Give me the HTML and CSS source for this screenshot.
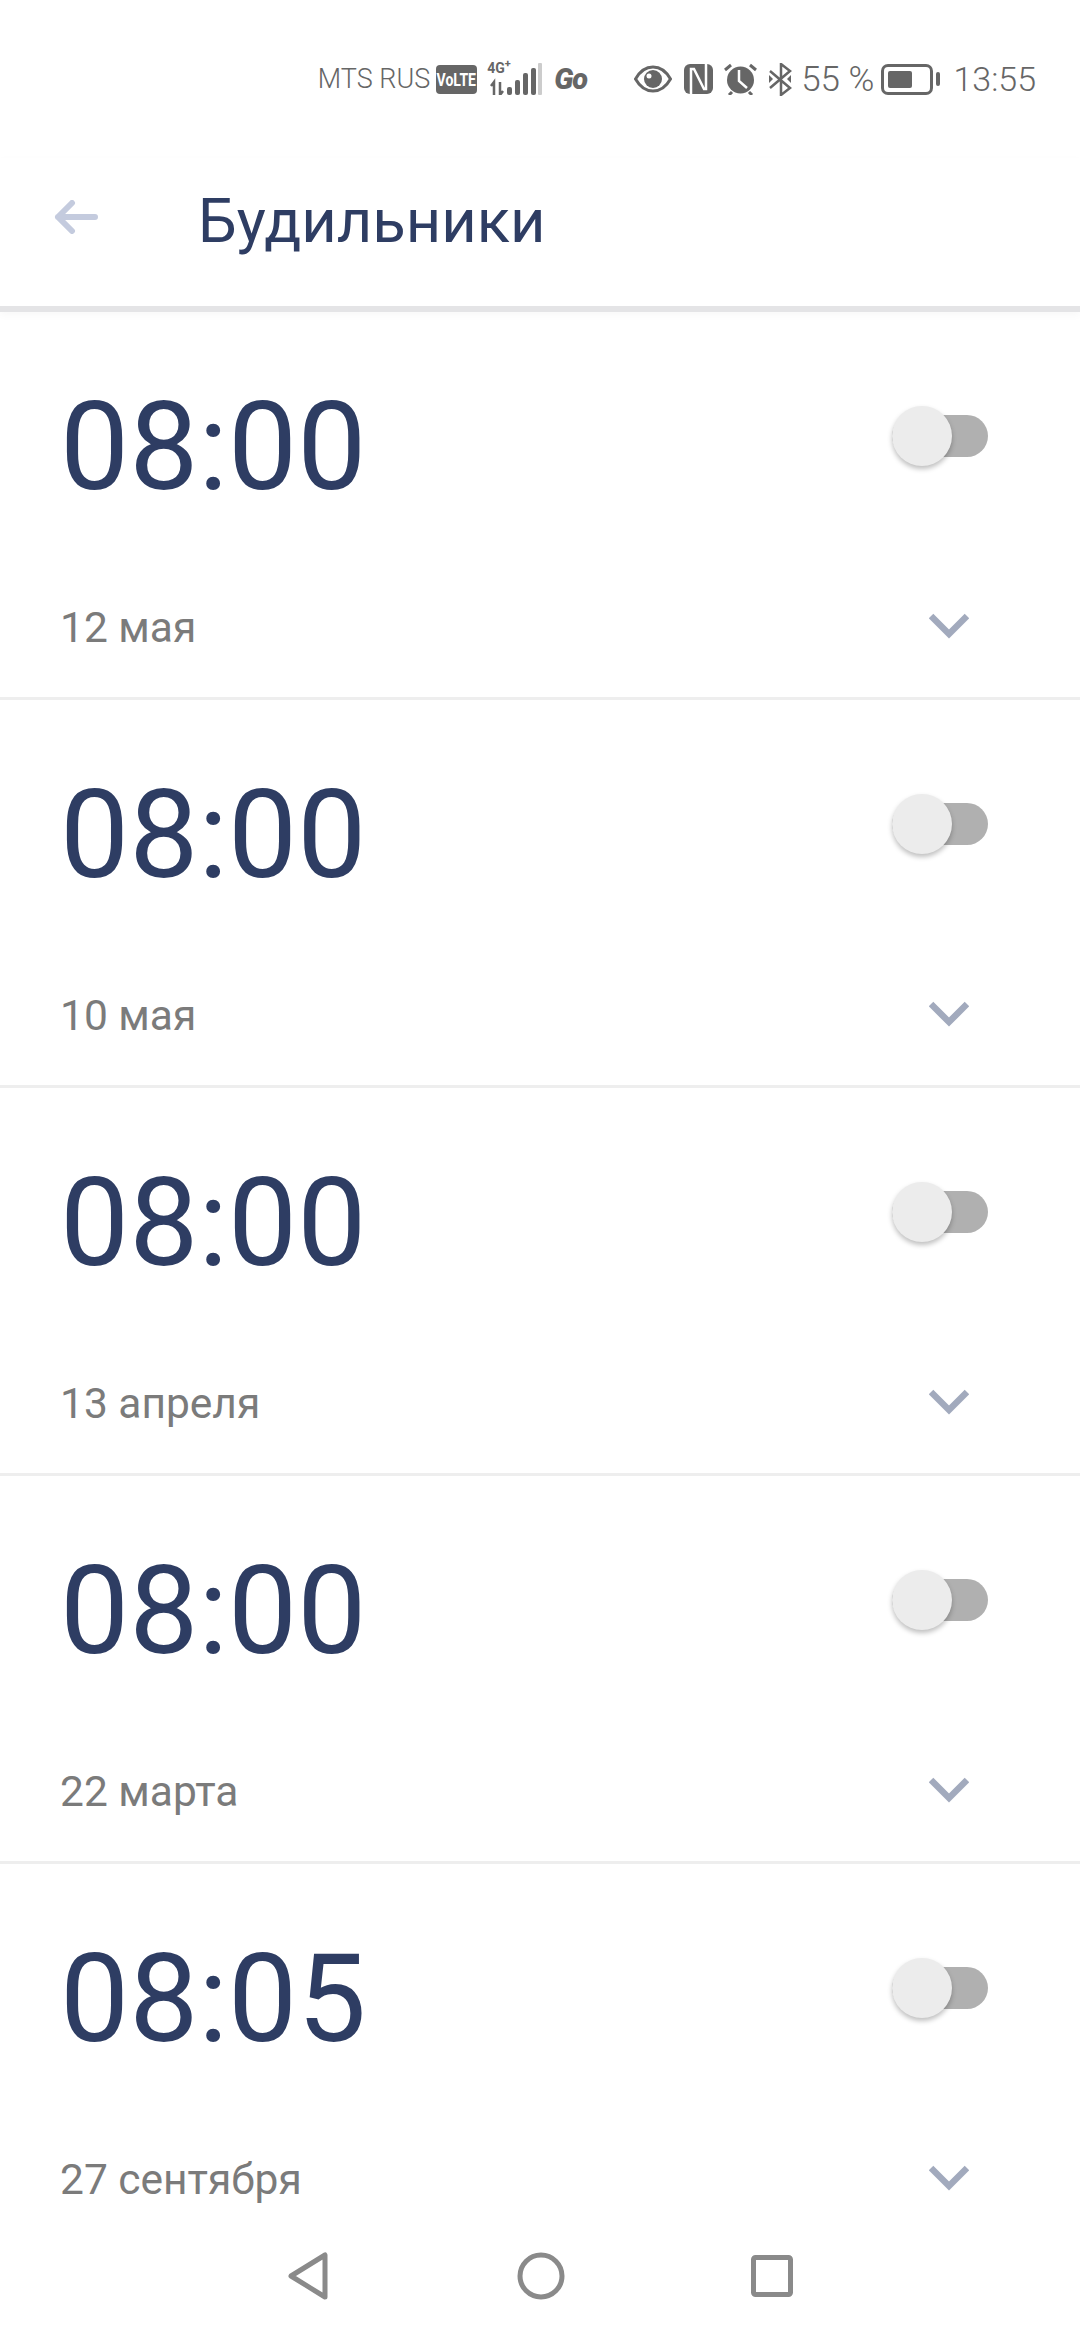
FILE: index.html
```html
<!DOCTYPE html>
<html lang="ru">
<head>
<meta charset="UTF-8">
<title>Будильники</title>
<link rel="stylesheet" href="styles.css">
</head>
<body>

<div class="screen">
  <div class="status">
    <span class="carrier">MTS RUS</span>
    <span class="volte"><span class="volte-text">VoLTE</span></span>
    <!-- 4G+ и сигнал -->
    <span class="signal">
      <span class="net">4G<sup>+</sup></span>
      <svg class="bars" width="55" height="32" viewBox="0 0 55 32">
        <path d="M7 32V19l-3 4M13 19v13l3-4" fill="none" stroke="#666" stroke-width="2.5"/>
        <rect x="20" y="24" width="5" height="8" rx="2" fill="#666"/>
        <rect x="28" y="17" width="5" height="15" rx="2" fill="#666"/>
        <rect x="36" y="10" width="5" height="22" rx="2" fill="#666"/>
        <rect x="44" y="5" width="5" height="27" rx="2" fill="#666"/>
        <rect x="51" y="0" width="4" height="32" rx="1" fill="#ccc"/>
      </svg>
    </span>
    <span class="go">Go</span>

    <!-- глаз -->
    <svg class="ic-eye" width="38" height="28" viewBox="0 0 38 28">
      <path d="M1.5 14C6 6 12 2 19 2s13 4 17.5 12C32 22 26 26 19 26S6 22 1.5 14z" fill="none" stroke="#666" stroke-width="3"/>
      <circle cx="19" cy="14" r="9" fill="#666"/>
      <circle cx="15" cy="11" r="2.5" fill="#fff"/>
    </svg>
    <!-- NFC -->
    <svg class="ic-nfc" width="29" height="30" viewBox="0 0 29 30">
      <rect width="29" height="30" rx="6" fill="#666"/>
      <path d="M7 30V5h3l10 20h2V0" fill="none" stroke="#fff" stroke-width="2.5"/>
    </svg>
    <!-- будильник -->
    <svg class="ic-alarm" width="33" height="32" viewBox="0 0 33 32">
      <circle cx="16.5" cy="17" r="13.5" fill="#666"/>
      <path d="M1 7l6-5M32 7l-6-5M8 29l-3 3M25 29l3 3" stroke="#666" stroke-width="3"/>
      <path d="M15 7v11l8 7" fill="none" stroke="#fff" stroke-width="2.5"/>
    </svg>
    <!-- bluetooth -->
    <svg class="ic-bt" width="24" height="33" viewBox="0 0 24 33">
      <path d="M2 8l20 17-9 7V1l9 7L2 25" fill="none" stroke="#666" stroke-width="2.5"/>
      <path d="M1 12l4 4-4 4zM23 12l-4 4 4 4z" fill="#666"/>
    </svg>
    <span class="percent">55 %</span>
    <!-- батарея -->
    <span class="battery"><span class="battery-level"></span></span>
    <span class="battery-nub"></span>
    <span class="clock">13:55</span>
  </div>

  <div class="header">
    <svg class="back" width="44" height="34" viewBox="0 0 44 34">
      <path d="M41 17H4M18 3L4 17l14 14" fill="none" stroke="#c4cbde" stroke-width="6" stroke-linecap="round" stroke-linejoin="round"/>
    </svg>
    <h1 class="title">Будильники</h1>
  </div>

  <div class="list">
    <div class="alarm">
      <div class="alarm-top">
        <span class="time">08:00</span>
        <span class="toggle"><span class="knob"></span></span>
      </div>
      <div class="alarm-bottom">
        <span class="date">12 мая</span>
        <svg class="chevron" width="40" height="26" viewBox="0 0 40 26"><path d="M2 3l18 18L38 3" fill="none" stroke="#a2aabd" stroke-width="6.5"/></svg>
      </div>
    </div>
    <div class="alarm">
      <div class="alarm-top">
        <span class="time">08:00</span>
        <span class="toggle"><span class="knob"></span></span>
      </div>
      <div class="alarm-bottom">
        <span class="date">10 мая</span>
        <svg class="chevron" width="40" height="26" viewBox="0 0 40 26"><path d="M2 3l18 18L38 3" fill="none" stroke="#a2aabd" stroke-width="6.5"/></svg>
      </div>
    </div>
    <div class="alarm">
      <div class="alarm-top">
        <span class="time">08:00</span>
        <span class="toggle"><span class="knob"></span></span>
      </div>
      <div class="alarm-bottom">
        <span class="date">13 апреля</span>
        <svg class="chevron" width="40" height="26" viewBox="0 0 40 26"><path d="M2 3l18 18L38 3" fill="none" stroke="#a2aabd" stroke-width="6.5"/></svg>
      </div>
    </div>
    <div class="alarm">
      <div class="alarm-top">
        <span class="time">08:00</span>
        <span class="toggle"><span class="knob"></span></span>
      </div>
      <div class="alarm-bottom">
        <span class="date">22 марта</span>
        <svg class="chevron" width="40" height="26" viewBox="0 0 40 26"><path d="M2 3l18 18L38 3" fill="none" stroke="#a2aabd" stroke-width="6.5"/></svg>
      </div>
    </div>
    <div class="alarm">
      <div class="alarm-top">
        <span class="time">08:05</span>
        <span class="toggle"><span class="knob"></span></span>
      </div>
      <div class="alarm-bottom">
        <span class="date">27 сентября</span>
        <svg class="chevron" width="40" height="26" viewBox="0 0 40 26"><path d="M2 3l18 18L38 3" fill="none" stroke="#a2aabd" stroke-width="6.5"/></svg>
      </div>
    </div>
  </div>

  <div class="nav">
    <svg class="nav-back" width="40" height="48" viewBox="0 0 40 48"><path d="M3 24L37 3v42z" fill="none" stroke="#8a8a8a" stroke-width="5" stroke-linejoin="round"/></svg>
    <svg class="nav-home" width="48" height="48" viewBox="0 0 48 48"><circle cx="24" cy="24" r="21" fill="none" stroke="#8a8a8a" stroke-width="5"/></svg>
    <svg class="nav-recent" width="42" height="42" viewBox="0 0 42 42"><rect x="2.5" y="2.5" width="37" height="37" rx="2" fill="none" stroke="#8a8a8a" stroke-width="5"/></svg>
  </div>
</div>

</body>
</html>
```

FILE: styles.css
```css
* { box-sizing: border-box; }
html, body { margin: 0; padding: 0; }
body { font-family: Roboto, "Noto Sans", sans-serif; background: #fff; }
.screen { width: 1080px; height: 2340px; display: flex; flex-direction: column; overflow: hidden; background: #fff; }

.status { height: 158px; flex: none; padding: 0 44px 0 0; display: flex; justify-content: flex-end; align-items: center; color: #666; }
.carrier { font-size: 27px; font-weight: 300; margin-right: 6px; }
.volte { width: 41px; height: 29px; border-radius: 4px; background: #666; display: flex; align-items: center; justify-content: center; margin-right: 10px; }
.volte-text { color: #fff; font-size: 18px; font-weight: 700; transform: scaleX(0.78); }
.signal { width: 55px; height: 32px; display: block; position: relative; margin-right: 12px; }
.net { position: absolute; left: 0; top: -3px; font-size: 14px; font-weight: 700; line-height: 16px; }
.net sup { font-size: 11px; line-height: 0; }
.bars { position: absolute; left: 0; top: 0; }
.go { width: 30px; font-size: 29px; font-weight: 900; font-style: italic; margin-right: 50px; letter-spacing: -1px; white-space: nowrap; }
.ic-eye { margin-right: 12px; }
.ic-nfc { margin-right: 11px; }
.ic-alarm { margin-right: 11px; }
.ic-bt { margin-right: 9px; }
.percent { font-size: 35px; font-weight: 300; margin-right: 7px; white-space: nowrap; }
.battery { width: 52px; height: 31px; border: 3px solid #666; border-radius: 7px; padding: 4px; display: block; }
.battery-level { display: block; width: 24px; height: 100%; background: #666; border-radius: 2px; }
.battery-nub { width: 4px; height: 14px; background: #666; border-radius: 2px; margin: 0 13px 0 3px; }
.clock { font-size: 34px; font-weight: 300; }

.header { height: 154px; flex: none; padding: 0 0 22px 54px; display: flex; align-items: center; background: #fff; border-bottom: 6px solid #e4e4e6; box-shadow: 0 3px 8px rgba(0,0,0,0.03); }
.back { flex: none; margin: 0 100px 8px 0; }
.title { margin: 0; font-size: 61.5px; font-weight: 400; color: #2e3d63; }

.list { flex: 1; overflow: hidden; }
.alarm { height: 388px; padding: 0 92px 0 60px; border-bottom: 3px solid #eeeeee; display: flex; flex-direction: column; }
.alarm-top { height: 265px; display: flex; justify-content: space-between; align-items: flex-start; padding-top: 60px; }
.time { font-size: 123px; line-height: 150px; color: #2e3d63; }
.toggle { width: 96px; height: 42px; margin-top: 43px; background: #b0b0b0; border-radius: 21px; display: block; position: relative; }
.knob { position: absolute; left: 0; top: -9px; width: 60px; height: 60px; border-radius: 50%; background: #ececec; box-shadow: 0 3px 5px rgba(0,0,0,0.25); }
.alarm-bottom { display: flex; justify-content: space-between; align-items: center; height: 100px; padding-right: 19px; }
.date { font-size: 42.5px; color: #7b7b7b; }
.chevron { margin-top: -2px; }

.nav { height: 128px; flex: none; background: #fff; display: flex; justify-content: center; align-items: center; }
.nav-back { flex: none; margin-right: 189px; }
.nav-home { flex: none; }
.nav-recent { flex: none; margin-left: 186px; }
```
